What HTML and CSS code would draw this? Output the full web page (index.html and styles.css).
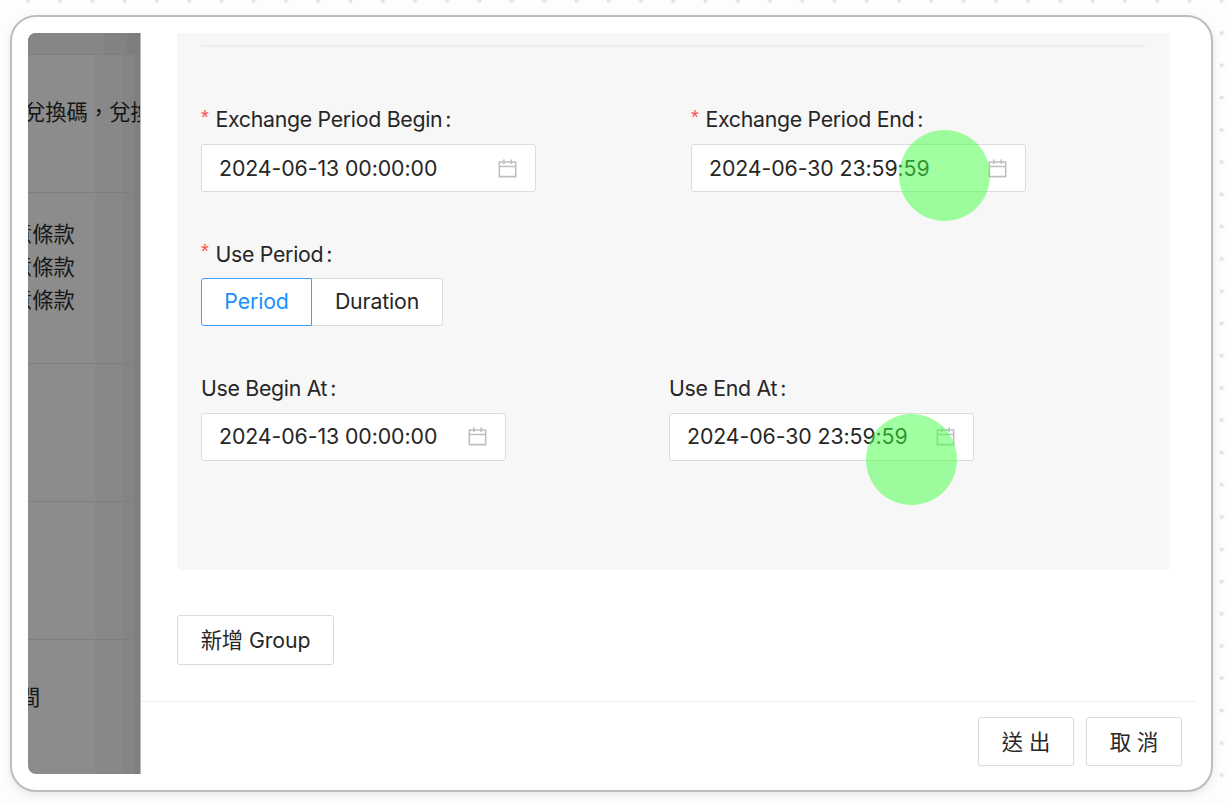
FILE: index.html
```
<!DOCTYPE html>
<html lang="zh-Hant">
<head>
<meta charset="utf-8">
<title>Exchange settings</title>
<link rel="stylesheet" href="styles.css">
</head>
<body>
<svg class="defs" aria-hidden="true">
  <symbol id="calendar" viewBox="0 0 1024 1024">
    <path d="M880 184H712v-64c0-4.400-3.600-8-8-8h-56c-4.400 0-8 3.600-8 8v64H384v-64c0-4.400-3.600-8-8-8h-56c-4.400 0-8 3.600-8 8v64H144c-17.700 0-32 14.300-32 32v664c0 17.700 14.300 32 32 32h736c17.700 0 32-14.300 32-32V216c0-17.700-14.300-32-32-32zm-40 656H184V460h656v380zM184 392V256h128v48c0 4.400 3.600 8 8 8h56c4.400 0 8-3.600 8-8v-48h256v48c0 4.400 3.600 8 8 8h56c4.400 0 8-3.600 8-8v-48h128v136H184z"/>
  </symbol>
</svg>
<div class="frame">
  <div class="screen">
    <aside class="backdrop">
      <div class="row row-head"></div>
      <div class="row row-note"><span class="t-note">兌換碼，兌換</span></div>
      <div class="row row-terms"><span>意條款</span><span>意條款</span><span>意條款</span></div>
      <div class="row row-empty"></div>
      <div class="row row-empty"></div>
      <div class="row row-time"><span>間</span></div>
    </aside>
    <main class="drawer">
      <div class="body">
        <section class="panel">
          <hr class="divider">
          <div class="pair pair-exchange">
            <div class="field">
              <div class="label"><i class="req">*</i><span class="name">Exchange Period Begin</span><b class="colon">:</b></div>
              <div class="input"><span class="value">2024-06-13 00:00:00</span><svg class="icon"><use href="#calendar"/></svg></div>
            </div>
            <div class="field">
              <div class="label"><i class="req">*</i><span class="name">Exchange Period End</span><b class="colon">:</b></div>
              <div class="input"><span class="value">2024-06-30 23:59:59</span><svg class="icon"><use href="#calendar"/></svg><span class="mark mark-exchange"></span></div>
            </div>
          </div>
          <div class="field">
            <div class="label"><i class="req">*</i><span class="name">Use Period</span><b class="colon">:</b></div>
            <div class="segments"><span class="seg seg-on">Period</span><span class="seg seg-off">Duration</span></div>
          </div>
          <div class="pair pair-use">
            <div class="field">
              <div class="label"><span class="name">Use Begin At</span><b class="colon">:</b></div>
              <div class="input"><span class="value">2024-06-13 00:00:00</span><svg class="icon"><use href="#calendar"/></svg></div>
            </div>
            <div class="field">
              <div class="label"><span class="name">Use End At</span><b class="colon">:</b></div>
              <div class="input"><span class="value">2024-06-30 23:59:59</span><svg class="icon"><use href="#calendar"/></svg><span class="mark mark-use"></span></div>
            </div>
          </div>
        </section>
        <div class="btn btn-add">新增 Group</div>
      </div>
      <footer class="footer">
        <div class="btn btn-foot">送 出</div>
        <div class="btn btn-foot">取 消</div>
      </footer>
    </main>
  </div>
</div>
</body>
</html>
```
FILE: styles.css
```
* { box-sizing: border-box; }
body {
  margin: 0;
  height: 804px;
  overflow: hidden;
  padding: 15px 13px 12px 10px;
  background: #fdfdfd radial-gradient(circle at 16.150px 16.150px, #e3e3e3 1.700px, transparent 2.400px) 11.700px -15.400px / 32.270px 32.270px;
  font-family: Inter, "Noto Sans CJK TC", sans-serif;
  font-size: 21.300px;
  color: #262626;
}
.defs { position: absolute; width: 0; height: 0; }
.frame {
  width: 1203px;
  height: 777px;
  padding: 16px;
  border: 2px solid #bdbdbd;
  border-radius: 26px;
  background: #fff;
  box-shadow: 0 3px 9px rgba(0, 0, 0, .09);
}
.screen { display: flex; width: 1168px; height: 741px; }
.backdrop {
  width: 113px;
  overflow: hidden;
  border-radius: 8px 0 0 8px;
  border-right: 1px solid #b9b9b9;
  color: #161616;
  white-space: nowrap;
  background: linear-gradient(90deg, #8c8c8c 67px, #888 67px 95px, #848484 95px 106px, #808080 106px);
}
.row { border-bottom: 1px solid #7f7f7f; }
.row-head { height: 22px; background: linear-gradient(90deg, #868686 76px, #828282 76px 99px, #7e7e7e 99px); }
.row-note { height: 138px; padding-top: 41px; line-height: 32px; }
.t-note { margin-left: -4px; }
.row-terms { height: 171px; padding-top: 24.500px; line-height: 33.400px; }
.row-terms span { display: block; margin-left: -17px; }
.row-empty { height: 138px; }
.row-time { height: 134px; border: 0; padding-top: 41px; line-height: 33px; }
.row-time span { margin-left: -9px; }
.drawer { width: 1055px; display: flex; flex-direction: column; }
.body { height: 668px; padding: 0 26px 0 36px; }
.panel {
  height: 537px;
  padding: 12px 25px 0 24px;
  border-radius: 0 0 5px 5px;
  background: #f7f7f7;
}
.divider { height: 2px; margin: 0 0 58px; border: 0; background: #ededed; }
.pair { display: grid; }
.pair-exchange { grid-template-columns: 490px 335px; }
.pair-exchange .label { line-height: 29px; }
.pair-exchange .input { width: 335px; }
.pair-use { grid-template-columns: 468px 305px; }
.pair-use .input { width: 305px; padding-bottom: 2px; }
.pair-use .label { height: 40px; }
.field { height: 134px; }
.label { display: flex; height: 39px; line-height: 30px; white-space: nowrap; }
.req { width: 14.500px; font-family: "Liberation Sans", sans-serif; font-size: 20px; line-height: 25px; font-style: normal; font-weight: 500; color: #ff4d4f; }
.name { letter-spacing: -.300px; }
.colon { margin-left: 3px; font-weight: 400; }
.input {
  position: relative;
  display: flex;
  align-items: center;
  justify-content: space-between;
  height: 48px;
  padding: 0 16px 0 17px;
  border: 1px solid #dcdcdc;
  border-radius: 3px;
  background: #fff;
}
.value { letter-spacing: -.080px; white-space: nowrap; }
.icon { width: 23px; height: 23px; fill: #bfbfbf; }
.mark {
  position: absolute;
  width: 91px;
  height: 91px;
  border-radius: 50%;
  background: rgba(65, 255, 65, .5);
}
.mark-exchange { left: 206.500px; top: -15.500px; }
.mark-use { left: 196px; top: -.500px; }
.segments { display: flex; height: 48px; line-height: 45px; text-align: center; letter-spacing: -.150px; }
.seg { height: 48px; background: #fff; border: 1px solid #dcdcdc; }
.seg-on { width: 111px; border-color: #409fff; border-radius: 3px 0 0 3px; color: #1890ff; }
.seg-off { width: 131px; border-left: 0; border-radius: 0 3px 3px 0; }
.btn {
  border: 1px solid #dadada;
  border-radius: 3px;
  background: #fff;
  box-shadow: 0 2px 1px rgba(0, 0, 0, .02);
  text-align: center;
  white-space: nowrap;
}
.btn-add { width: 157px; height: 50px; margin-top: 45px; line-height: 48px; letter-spacing: -.100px; }
.footer {
  display: flex;
  justify-content: flex-end;
  gap: 12px;
  height: 73px;
  padding: 15px 14px 0 0;
  border-top: 1px solid #efefef;
}
.btn-foot { width: 96px; height: 49px; line-height: 48px; }
```
